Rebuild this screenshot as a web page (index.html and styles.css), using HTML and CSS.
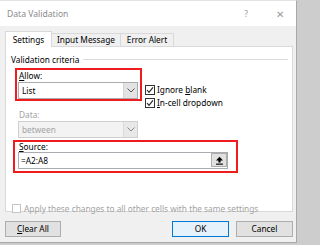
FILE: index.html
```html
<!DOCTYPE html>
<html>
<head>
<meta charset="utf-8">
<link rel="stylesheet" href="styles.css">
</head>
<body>
<div class="dialog">
  <div class="titlebar">
    <span class="title">Data Validation</span>
    <span class="help">?</span>
    <span class="close">✕</span>
  </div>
  <div class="body">
    <div class="tabs">
      <div class="tab active t1">Settings</div>
      <div class="tab t2">Input Message</div>
      <div class="tab t3">Error Alert</div>
    </div>
    <div class="panel">
      <div class="group-head"><span>Validation criteria</span><span class="rule"></span></div>
      <div class="row1">
        <div class="redbox allow">
          <div class="lbl lbl-allow"><u>A</u>llow:</div>
          <div class="combo">
            <span class="val">List</span>
            <span class="drop"><svg width="8" height="5" viewBox="0 0 8 5"><path d="M0.5 0.5 L4 4 L7.5 0.5" fill="none" stroke="#555" stroke-width="1"/></svg></span>
          </div>
        </div>
        <div class="checks">
          <div class="chk"><span class="box"><svg width="8" height="8" viewBox="0 0 8 8"><path d="M1 4 L3 6.3 L7 1.3" fill="none" stroke="#222" stroke-width="1.1"/></svg></span><span>Ignore <u>b</u>lank</span></div>
          <div class="chk"><span class="box"><svg width="8" height="8" viewBox="0 0 8 8"><path d="M1 4 L3 6.3 L7 1.3" fill="none" stroke="#222" stroke-width="1.1"/></svg></span><span><u>I</u>n-cell dropdown</span></div>
        </div>
      </div>
      <div class="data-lbl">Data:</div>
      <div class="combo disabled">
        <span class="val">between</span>
        <span class="drop"><svg width="8" height="5" viewBox="0 0 8 5"><path d="M0.5 0.5 L4 4 L7.5 0.5" fill="none" stroke="#888" stroke-width="1"/></svg></span>
      </div>
      <div class="redbox source">
        <div class="lbl lbl-src"><u>S</u>ource:</div>
        <div class="input">
          <span class="val">=A2:A8</span>
          <span class="refbtn"><svg width="9" height="9" viewBox="0 0 9 9"><path d="M4.5 0.8 L1 4.6 L3.4 4.6 L3.4 6.6 L5.6 6.6 L5.6 4.6 L8 4.6 Z" fill="#000"/><rect x="1" y="7.6" width="7" height="1.1" fill="#000"/></svg></span>
        </div>
      </div>
      <div class="apply">
        <span class="box dim"></span>
        <span>Apply these changes to all other cells with the same settings</span>
      </div>
    </div>
    <div class="buttons">
      <div class="btn"><u>C</u>lear All</div>
      <div class="spacer"></div>
      <div class="btn ok">OK</div>
      <div class="btn cancel">Cancel</div>
    </div>
  </div>
</div>
</body>
</html>
```
FILE: styles.css
```css
* { box-sizing: border-box; }
body {
  margin: 0;
  width: 300px;
  height: 245px;
  overflow: hidden;
  background: #cdcdcd;
  font-family: "Noto Sans", "Open Sans", sans-serif;
  font-size: 8.3px;
  color: #000;
}
u { text-decoration: underline; text-underline-offset: 1px; }
.dialog {
  width: 297px;
  height: 243px;
  background: #f0f0f0;
  border-top: 1px solid #e2e2e2;
  border-right: 1px solid #a8a8a8;
  border-bottom: 1px solid #a8a8a8;
  display: flex;
  flex-direction: column;
}
.titlebar {
  height: 25px;
  flex: none;
  background: #fff;
  display: flex;
  align-items: center;
  padding-left: 7px;
  color: #8c8c8c;
  font-size: 8.6px;
}
.title { flex: 1; }
.help { width: 12px; text-align: center; margin-right: 22px; color: #9a9a9a; }
.close { width: 12px; text-align: center; margin-right: 10px; color: #9a9a9a; font-size: 10px; }
.body { padding: 5px 0 0 5px; }
.tabs { display: flex; align-items: flex-end; height: 15px; }
.tab {
  height: 13px;
  border: 1px solid #d9d9d9;
  border-bottom: none;
  text-align: center;
  line-height: 11px;
  margin-left: -1px;
  white-space: nowrap;
}
.tab.active {
  height: 16px;
  margin-left: 0;
  margin-bottom: -1px;
  background: #fff;
  position: relative;
  z-index: 1;
  line-height: 15px;
}
.t1 { width: 47px; }
.t2 { width: 70px; }
.t3 { width: 54px; }
.panel {
  width: 288px;
  height: 166px;
  background: #fff;
  border: 1px solid #d9d9d9;
}
.group-head {
  display: flex;
  align-items: center;
  height: 12px;
  margin: 6px 4px 0 5px;
}
.rule { flex: 1; height: 1px; background: #dcdcdc; margin-left: 4px; }
.row1 { display: flex; margin-top: 3px; }
.redbox { border: 2px solid #ee1c1c; }
.redbox.allow {
  margin-left: 9px;
  width: 127px;
  height: 33px;
  padding: 0 2px 0 1px;
}
.lbl { padding-left: 1px; }
.lbl-allow { height: 12px; line-height: 12px; }
.combo {
  display: flex;
  width: 120px;
  height: 17px;
  border: 1px solid #a9abb0;
  background: #fff;
}
.combo .val { flex: 1; padding-left: 3px; line-height: 15px; }
.combo .drop {
  width: 14px;
  background: #e3e3e3;
  border-left: 1px solid #d4d4d4;
  display: flex;
  align-items: center;
  justify-content: center;
}
.combo.disabled {
  margin-left: 12px;
  background: #f3f3f3;
  border-color: #cfcfcf;
  color: #a3a3a3;
}
.combo.disabled .drop { background: #e8e8e8; border-left-color: #dcdcdc; }
.checks { margin-left: 3px; margin-top: 15px; }
.chk { display: flex; align-items: center; height: 13px; }
.box {
  width: 10px;
  height: 10px;
  border: 1px solid #333;
  background: #fff;
  display: flex;
  align-items: center;
  justify-content: center;
  margin-right: 2px;
  flex: none;
}
.data-lbl {
  margin-left: 13px;
  height: 12px;
  line-height: 12px;
  color: #a3a3a3;
}
.redbox.source {
  margin-left: 7px;
  margin-top: 2px;
  width: 225px;
  height: 33px;
  padding: 0 8px 0 3px;
}
.lbl-src { height: 10px; line-height: 9px; }
.input {
  display: flex;
  align-items: flex-start;
  height: 17px;
  border: 1px solid #a9abb0;
  background: #fff;
}
.input .val { flex: 1; padding-left: 2px; line-height: 15px; }
.refbtn {
  width: 16px;
  height: 14px;
  background: #e1e1e1;
  border: 1px solid #adadad;
  display: flex;
  align-items: center;
  justify-content: center;
}
.apply {
  display: flex;
  align-items: center;
  margin: 31px 0 0 6px;
  height: 9px;
  color: #a3a3a3;
  white-space: nowrap;
}
.box.dim { width: 9px; height: 9px; border-color: #c4c4c4; margin-right: 3px; }
.buttons { display: flex; width: 288px; margin-top: 9px; }
.spacer { flex: 1; }
.btn {
  width: 56px;
  height: 16px;
  background: #e1e1e1;
  border: 1px solid #adadad;
  text-align: center;
  line-height: 14px;
}
.btn.ok { width: 57px; background: #e5f1fb; border-color: #0078d7; margin-right: 7px; }
.btn.cancel { width: 57px; }
```
